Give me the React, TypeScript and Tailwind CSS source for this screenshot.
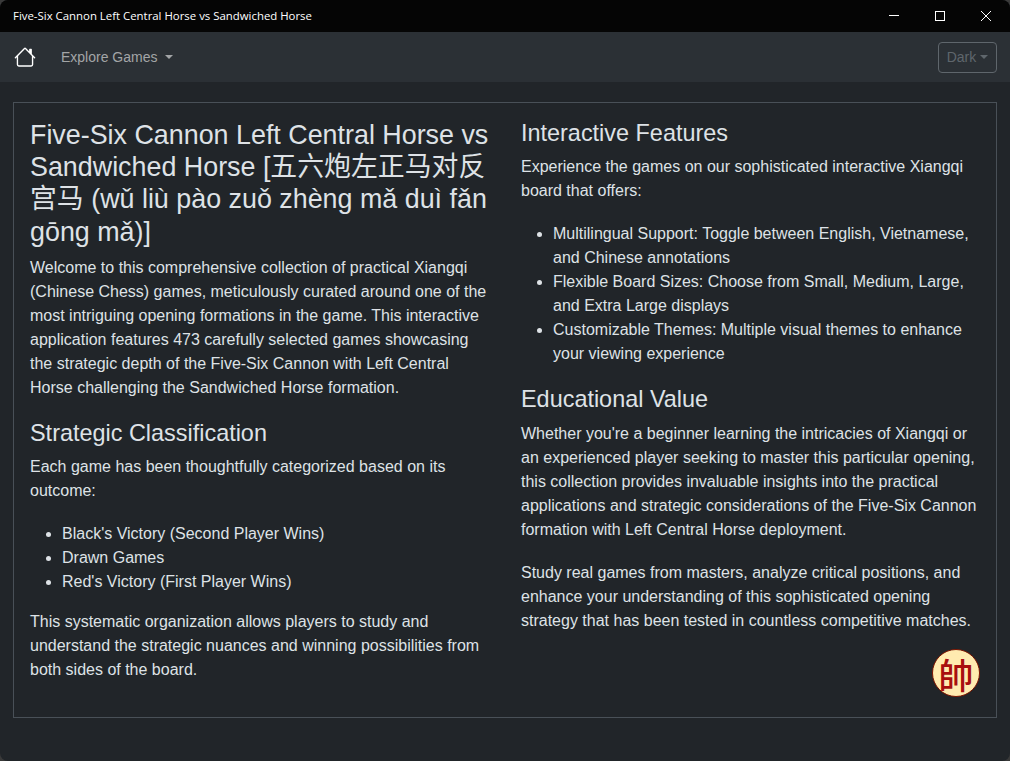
import type { ReactNode } from "react";
import { BsHouse } from "react-icons/bs";

const Caret = ({ className }: { className: string }) => (
  <span className={`inline-block border-x-[4.2px] border-t-[4.8px] border-x-transparent ${className}`} />
);

const TitleBar = () => (
  <div className="flex h-8 shrink-0 items-center justify-between bg-[#050505] pr-px pl-[13px] font-['Open_Sans',sans-serif] text-[11.4px] text-white">
    <span>Five-Six Cannon Left Central Horse vs Sandwiched Horse</span>
    <div className="flex">
      <button className="flex h-8 w-[46px] items-center justify-center">
        <svg width="10" height="10" viewBox="0 0 10 10"><path d="M0 4.5h10" stroke="white" /></svg>
      </button>
      <button className="flex h-8 w-[46px] items-center justify-center">
        <svg width="10" height="10" viewBox="0 0 10 10"><rect x="0.5" y="0.5" width="9" height="9" fill="none" stroke="white" /></svg>
      </button>
      <button className="flex h-8 w-[46px] items-center justify-center">
        <svg width="10" height="10" viewBox="0 0 10 10"><path d="M0 0l10 10M10 0L0 10" stroke="white" /></svg>
      </button>
    </div>
  </div>
);

const NavBar = () => (
  <nav className="flex h-[50px] shrink-0 items-center justify-between bg-[#2b3035] pr-[13px] pl-[14px]">
    <div className="flex items-center">
      <BsHouse className="text-white" size={22} />
      <button className="ml-[25px] flex items-center gap-2 text-[14px] text-[#a3a5a7]">
        Explore Games
        <Caret className="border-t-[#a3a5a7]" />
      </button>
    </div>
    <button className="flex h-[31px] w-[59px] items-center justify-center gap-[4px] rounded-[4px] border border-[#5f666c] text-[14px] text-[#5f666c]">
      Dark
      <Caret className="border-t-[#5f666c]" />
    </button>
  </nav>
);

const H4 = ({ children, first }: { children: ReactNode; first?: boolean }) => (
  <h4 className={`mb-2 text-[23.43px] leading-[28.1px] font-normal ${first ? "" : "mt-[19.2px]"}`}>{children}</h4>
);

const Bullets = ({ items }: { items: string[] }) => (
  <ul className="mb-4 list-disc pl-8">
    {items.map((item) => (
      <li key={item}>{item}</li>
    ))}
  </ul>
);

export default function App() {
  return (
    <div className="h-[761px] w-[1010px] overflow-hidden bg-[#3a3a3a]">
      <div className="flex h-full flex-col overflow-hidden rounded-lg bg-[#212529] font-['Liberation_Sans','Noto_Sans_CJK_SC',sans-serif] text-base leading-6 text-[#dee2e6]">
        <TitleBar />
        <NavBar />
        <main className="flex-1 px-[13px] pt-5">
          <div className="relative grid h-[616px] grid-cols-2 border border-[#495057] px-4 pt-4">
            <div className="pr-4">
              <h3 className="mb-2 text-[26.86px] leading-[32.2px] font-normal">
                Five-Six Cannon Left Central Horse vs Sandwiched Horse [五六炮左正马对反宫马 (wǔ liù pào zuǒ zhèng mǎ duì fǎn gōng mǎ)]
              </h3>
              <p className="mb-[19.2px]">
                Welcome to this comprehensive collection of practical Xiangqi (Chinese Chess) games, meticulously curated around one of the most intriguing opening formations in the game. This interactive application features 473 carefully selected games showcasing the strategic depth of the Five-Six Cannon with Left Central Horse challenging the Sandwiched Horse formation.
              </p>
              <H4>Strategic Classification</H4>
              <p className="mb-[19.2px]">Each game has been thoughtfully categorized based on its outcome:</p>
              <Bullets items={["Black's Victory (Second Player Wins)", "Drawn Games", "Red's Victory (First Player Wins)"]} />
              <p>This systematic organization allows players to study and understand the strategic nuances and winning possibilities from both sides of the board.</p>
            </div>
            <div className="pl-4">
              <H4 first>Interactive Features</H4>
              <p className="mb-[19.2px]">Experience the games on our sophisticated interactive Xiangqi board that offers:</p>
              <Bullets
                items={[
                  "Multilingual Support: Toggle between English, Vietnamese, and Chinese annotations",
                  "Flexible Board Sizes: Choose from Small, Medium, Large, and Extra Large displays",
                  "Customizable Themes: Multiple visual themes to enhance your viewing experience",
                ]}
              />
              <H4>Educational Value</H4>
              <p className="mb-[19.2px]">
                Whether you're a beginner learning the intricacies of Xiangqi or an experienced player seeking to master this particular opening, this collection provides invaluable insights into the practical applications and strategic considerations of the Five-Six Cannon formation with Left Central Horse deployment.
              </p>
              <p>Study real games from masters, analyze critical positions, and enhance your understanding of this sophisticated opening strategy that has been tested in countless competitive matches.</p>
            </div>
            <div className="absolute right-4 bottom-5 flex size-12 items-center justify-center rounded-full border-[1.5px] border-[#7a1400] bg-[#ffebb0] font-['Noto_Sans_CJK_TC',sans-serif] text-[35px] leading-none font-medium text-[#a80f0f]">
              帥
            </div>
          </div>
        </main>
      </div>
    </div>
  );
}
